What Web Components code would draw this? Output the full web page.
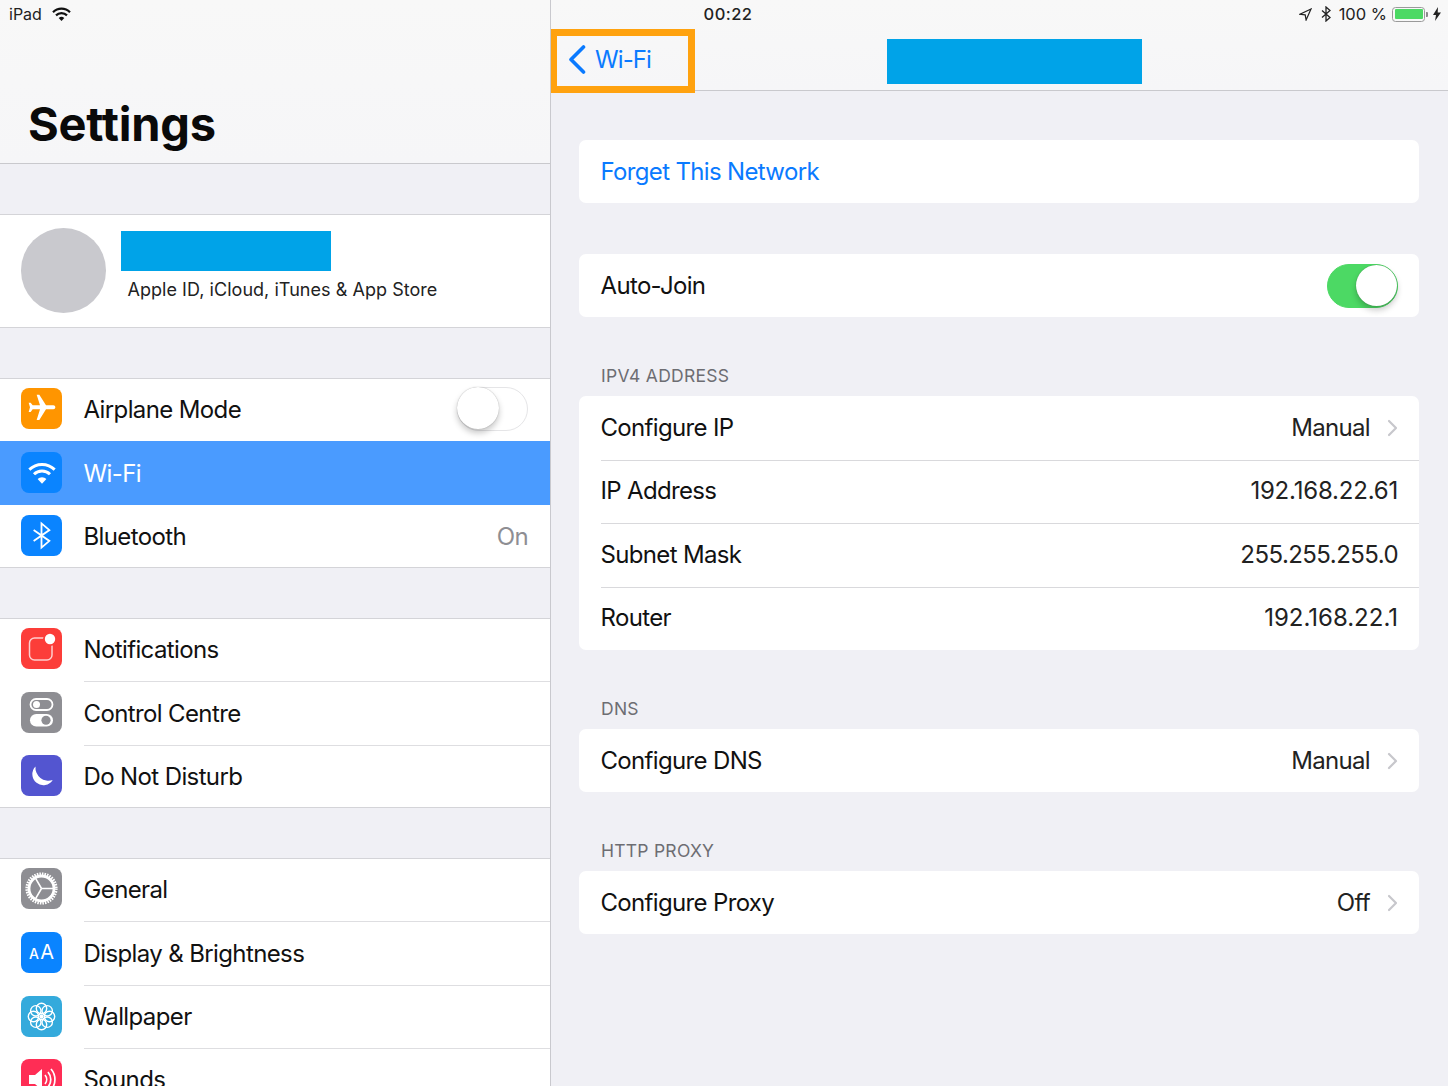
<!doctype html>
<html lang="en"><head><meta charset="utf-8"><title>Settings</title>
<style>
html,body{margin:0;padding:0;height:100%;overflow:hidden;background:#f0f0f5}
body{font-family:Inter,"Liberation Sans",sans-serif;color:#111}
</style></head><body>
<ipad-screen>
  <ios-status slot="status"></ios-status>
  <settings-sidebar slot="left">
    <set-group>
      <profile-row></profile-row>
    </set-group>
    <set-group>
      <set-row label="Airplane Mode"><app-icon slot="icon" kind="plane"></app-icon><ios-switch slot="end"></ios-switch></set-row>
      <set-row label="Wi-Fi" selected><app-icon slot="icon" kind="wifi"></app-icon></set-row>
      <set-row label="Bluetooth" value="On" muted><app-icon slot="icon" kind="bt"></app-icon></set-row>
    </set-group>
    <set-group>
      <set-row label="Notifications"><app-icon slot="icon" kind="notif"></app-icon></set-row>
      <set-row label="Control Centre"><app-icon slot="icon" kind="cc"></app-icon></set-row>
      <set-row label="Do Not Disturb"><app-icon slot="icon" kind="moon"></app-icon></set-row>
    </set-group>
    <set-group>
      <set-row label="General"><app-icon slot="icon" kind="gear"></app-icon></set-row>
      <set-row label="Display &amp; Brightness"><app-icon slot="icon" kind="aa"></app-icon></set-row>
      <set-row label="Wallpaper"><app-icon slot="icon" kind="flower"></app-icon></set-row>
      <set-row label="Sounds"><app-icon slot="icon" kind="sound"></app-icon></set-row>
    </set-group>
  </settings-sidebar>
  <wifi-detail slot="right">
    <detail-card first><detail-row label="Forget This Network" link></detail-row></detail-card>
    <detail-card><detail-row label="Auto-Join"><ios-switch slot="end" on></ios-switch></detail-row></detail-card>
    <detail-card heading="IPV4 ADDRESS">
      <detail-row label="Configure IP" value="Manual" chevron></detail-row>
      <detail-row label="IP Address" value="192.168.22.61" track="-.2px"></detail-row>
      <detail-row label="Subnet Mask" value="255.255.255.0" track="-.55px"></detail-row>
      <detail-row label="Router" value="192.168.22.1" track="0px"></detail-row>
    </detail-card>
    <detail-card heading="DNS"><detail-row label="Configure DNS" value="Manual" chevron></detail-row></detail-card>
    <detail-card heading="HTTP PROXY"><detail-row label="Configure Proxy" value="Off" chevron></detail-row></detail-card>
  </wifi-detail>
</ipad-screen>
<script>
const FONT='Inter,"Liberation Sans",sans-serif';
function def(name,html,cls){
  const t=document.createElement('template');t.innerHTML=html;
  customElements.define(name,class extends HTMLElement{
    constructor(){super();this.attachShadow({mode:'open'}).appendChild(t.content.cloneNode(true));}
    connectedCallback(){cls&&cls.call(this,this.shadowRoot);}
  });
}
def('ipad-screen',`<style>
:host{display:grid;grid-template-columns:551px 1fr;width:1448px;height:1086px;position:relative;overflow:hidden}
.st{position:absolute;left:0;right:0;top:0;z-index:3}
</style><div class="st"><slot name="status"></slot></div><slot name="left"></slot><slot name="right"></slot>`);

def('ios-status',`<style>
:host{display:grid;grid-template-columns:1fr auto 1fr;align-items:center;height:28px;padding:0 7px 0 9px;font:400 16px/28px ${FONT};letter-spacing:0;color:#222}
.l,.r{display:flex;align-items:center}
.l svg{margin-left:10px}
.c{font-weight:500;font-size:16.500px;letter-spacing:.45px;position:relative;left:3px}
.r{justify-content:flex-end}
.pc{font-size:16.500px}
.bat{border:1.500px solid #9a9a9a;border-radius:3.500px;padding:1.500px;box-sizing:border-box;margin-left:5px;width:33px;height:15px}
.bat i{display:block;height:100%;background:#4cd964;border-radius:1px}
.nub{width:2px;height:5px;background:#8a8a8a;margin:0 5px 0 1px;border-radius:0 1px 1px 0}
</style>
<div class="l"><span>iPad</span><svg width="19" height="15" viewBox="0 0 19 15" fill="none" stroke="#111" stroke-width="2.200"><path d="M1 5.200a12 12 0 0 1 17 0"/><path d="M4 8.400a7.800 7.800 0 0 1 11 0"/><path d="M9.500 14L6.700 11a4 4 0 0 1 5.600 0z" fill="#111" stroke="none"/></svg></div>
<div class="c">00:22</div>
<div class="r">
<svg width="13" height="13" viewBox="0 0 13 13" fill="none" stroke="#222" stroke-width="1.200"><path d="M12 1L1 6.300l5.200.6.900 5.100z"/></svg>
<svg style="margin:0 7px 0 9px" width="11" height="16" viewBox="0 0 11 16" fill="none" stroke="#222" stroke-width="1.300"><path d="M1 4.500l8 7-4 3.500V1l4 3.500-8 7"/></svg>
<span class="pc">100 %</span><div class="bat"><i></i></div><div class="nub"></div>
<svg width="8" height="14" viewBox="0 0 8 14"><path d="M5 0L0 8h3l-1 6 6-8.500H4.700z" fill="#222"/></svg>
</div>`);

def('settings-sidebar',`<style>
:host{display:block;box-sizing:border-box;width:551px;height:1086px;background:#f0f0f5;border-right:1px solid #c9c9ce;overflow:hidden}
header{box-sizing:border-box;height:164px;background:linear-gradient(#f8f8f8,#f6f6f8);border-bottom:1px solid #c9c9cd;padding:96px 0 0 28px}
h1{margin:0;font:700 47px/56px ${FONT};letter-spacing:-.2px;color:#0a0a0a}
</style><header><h1>Settings</h1></header><slot></slot>`);

def('set-group',`<style>
:host{display:block;margin-top:50px;background:#fff;border-top:1px solid #d4d4d8;border-bottom:1px solid #d4d4d8}
::slotted(set-row:not(:first-child)){--sep:block}
</style><slot></slot>`);

def('profile-row',`<style>
:host{display:block;box-sizing:border-box;height:112px;position:relative;padding:13px 0 0 21px;background:#fff}
.w{display:flex;gap:15px}
.av{width:85px;height:84.500px;border-radius:50%;background:#c9c9ce;flex:none}
.m{padding-top:3px}
.name{width:210px;height:40px;background:#00a3e8}
.sub{font:400 18px/22px ${FONT};letter-spacing:.04px;margin:8px 0 0 6.500px;color:#222;white-space:nowrap}
</style><div class="w"><div class="av"></div><div class="m"><div class="name"></div><div class="sub">Apple ID, iCloud, iTunes &amp; App Store</div></div></div>`);

def('set-row',`<style>
:host{display:flex;align-items:center;box-sizing:border-box;height:63.500px;padding:0 22px 0 21px;position:relative;font:400 24px/30px ${FONT};letter-spacing:-.62px;color:#111}
:host(:first-child){height:62px;padding-bottom:2px}
:host(:last-child){height:62.500px}
:host([selected]){background:#4a9bff;color:#fff}
:host::before{content:"";display:var(--sep,none);position:absolute;left:84px;right:0;top:0;height:1px;background:#dedee1}
.ic{width:41px;height:41px;margin-right:22px;flex:none}
:host(:first-child) .ic{position:relative;top:-1px}
.lb{flex:1;white-space:nowrap;margin-left:-.5px;padding-top:2px}
.val{color:#8e8e93;padding-top:2px}
</style><div class="ic"><slot name="icon"></slot></div><div class="lb"></div><div class="val"></div><slot name="end"></slot>`,
function(s){s.querySelector('.lb').textContent=this.getAttribute('label');s.querySelector('.val').textContent=this.getAttribute('value')||'';
 const p=this.previousElementSibling; if(p&&p.hasAttribute('selected')) this.style.setProperty('--sep','none');
 if(this.hasAttribute('selected')) this.style.setProperty('--sep','none');});

const V='0 0 41 41';
const ICONS={
plane:['#ff9500','<path transform="rotate(90 12 12)" fill="#fff" d="M21 16v-2l-8-5V3.500c0-.83-.67-1.500-1.500-1.500S10 2.670 10 3.500V9l-8 5v2l8-2.500V19l-2 1.500V22l3.500-1 3.500 1v-1.500L13 19v-5.500l8 2.500z"/>',32],
wifi:['#0a84ff','<g fill="none" stroke="#fff" stroke-width="2.200"><path d="M2.500 9.500a13.500 13.500 0 0 1 19 0"/><path d="M6 13a8.500 8.500 0 0 1 12 0"/></g><path fill="#fff" d="M12 20l-3.300-3.500a4.700 4.700 0 0 1 6.600 0z"/>',32],
bt:['#0a84ff','<path fill="none" stroke="#fff" stroke-width="1.500" d="M5.500 7.500l13 9L12 22V2l6.500 5.500-13 9"/>',29],
notif:['#fc3d39','<rect x="8.500" y="10" width="22.500" height="22" rx="5" fill="none" stroke="#fff" stroke-opacity=".75" stroke-width="1.500"/><circle cx="29" cy="11" r="7" fill="#fc3d39"/><circle cx="29" cy="11" r="5.200" fill="#fff"/>',41,V],
cc:['#8e8e93','<rect x="9.500" y="7" width="22" height="11" rx="5.500" fill="none" stroke="#fff" stroke-width="1.800"/><circle cx="15.500" cy="12.500" r="3.500" fill="#fff"/><rect x="9" y="22" width="23" height="12.500" rx="6.250" fill="#fff"/><circle cx="25" cy="28.250" r="4.600" fill="#8e8e93"/>',41,V],
moon:['#5355d0','<path fill="#fff" d="M14.500 11.500A11 11 0 1 0 31.700 25A13 13 0 0 1 14.500 11.500z"/>',41,V],
gear:['#8e8e93','<circle cx="20.500" cy="20.500" r="12.500" fill="none" stroke="#fff" stroke-width="2.800"/><circle cx="20.500" cy="20.500" r="14.500" fill="none" stroke="#fff" stroke-width="3.200" stroke-dasharray="1.500 1.030"/><g stroke="#fff" stroke-width="1.600"><path d="M20.500 20.500H33M20.500 20.500l-6.200-10.700M20.500 20.500l-6.200 10.700"/></g>',41,V],
flower:['#34aadc','<g fill="none" stroke="#fff" stroke-width="1.400"><circle cx="20.500" cy="12.500" r="5.200"/><circle cx="26.200" cy="14.800" r="5.200"/><circle cx="28.500" cy="20.500" r="5.200"/><circle cx="26.200" cy="26.200" r="5.200"/><circle cx="20.500" cy="28.500" r="5.200"/><circle cx="14.800" cy="26.200" r="5.200"/><circle cx="12.500" cy="20.500" r="5.200"/><circle cx="14.800" cy="14.800" r="5.200"/></g><circle cx="20.500" cy="20.500" r="2" fill="#fff"/>',41,V],
sound:['#ff2d55','<path fill="#fff" d="M8 16h6l7-6v21l-7-6H8z"/><g fill="none" stroke="#fff" stroke-width="1.700"><path d="M24 16a7 7 0 0 1 0 9"/><path d="M27 13a11.500 11.500 0 0 1 0 15"/><path d="M30 10a16 16 0 0 1 0 21"/></g>',41,V],
};
def('app-icon',`<style>
:host{display:flex;align-items:center;justify-content:center;width:41px;height:41px;border-radius:8px;overflow:hidden}
.aa{color:#fff;font-family:${FONT};font-weight:500;display:flex;align-items:baseline;gap:1.500px;letter-spacing:0}
.a1{font-size:14px;line-height:20px}.a2{font-size:20px;line-height:20px;font-weight:400}
</style><div id="x" style="display:contents"></div>`,function(s){
 const k=this.getAttribute('kind'),x=s.getElementById('x');
 if(k==='aa'){this.style.background='#0a84ff';x.innerHTML='<div class="aa"><span class="a1">A</span><span class="a2">A</span></div>';return;}
 const [bg,svg,size,vb]=ICONS[k];this.style.background=bg;
 x.innerHTML=`<svg width="${size}" height="${size}" viewBox="${vb||'0 0 24 24'}" style="flex:none">${svg}</svg>`;
});

def('ios-switch',`<style>
:host{display:block;box-sizing:border-box;width:71px;height:44px;border-radius:22px;border:1.500px solid #e5e5e7;background:#fff;position:relative;flex:none}
:host([on]){background:#4cd964;border-color:#4cd964}
i{position:absolute;left:-1.500px;top:-1.500px;width:42px;height:42px;border-radius:50%;background:#fff;box-shadow:0 4px 6px rgba(0,0,0,.22),0 0 1px rgba(0,0,0,.35)}
:host([on]) i{left:auto;right:0;top:0;width:41px;height:41px}
</style><i></i>`);

def('wifi-detail',`<style>
:host{display:block;height:1086px;background:#f0f0f5;overflow:hidden}
nav{box-sizing:border-box;height:91px;background:linear-gradient(#f8f8f8,#f6f6f8);border-bottom:1px solid #c9c9cd;position:relative;display:flex;padding-top:39px}
.back{display:flex;align-items:flex-start;width:336px;box-sizing:border-box;padding:6px 0 0 17px;color:#0a7aff;font:400 24px/30px ${FONT};letter-spacing:-.9px}
.back svg{margin-right:9px;margin-top:0}
.title{width:255px;height:45px;background:#00a3e8}
.hl{position:absolute;left:-1px;top:29px;width:145px;height:64px;box-sizing:border-box;border:7px solid #ffa20f;z-index:2}
main{padding:49px 29px 0 28px}
</style><nav><div class="back"><svg width="18" height="30" viewBox="0 0 18 30" fill="none" stroke="#0a7aff" stroke-width="3.600" stroke-linecap="round" stroke-linejoin="round"><path d="M15.500 2L3 14.500 15.500 27"/></svg>Wi-Fi</div><div class="title"></div><div class="hl"></div></nav><main><slot></slot></main>`);

def('detail-card',`<style>
:host{display:block;margin-top:51px}
:host([first]){margin-top:0}
:host([heading]){margin-top:48px}
h2{display:none;margin:0;font:400 17.500px/22px ${FONT};letter-spacing:.25px;color:#6d6d72;padding:0 0 9px 22px}
:host([heading]) h2{display:block}
.c{background:#fff;border-radius:7px;overflow:hidden}
</style><h2></h2><div class="c"><slot></slot></div>`,function(s){s.querySelector('h2').textContent=this.getAttribute('heading')||'';});

def('detail-row',`<style>
:host{display:flex;align-items:center;box-sizing:border-box;height:63.500px;padding:0 21px 0 21.500px;position:relative;font:400 24px/30px ${FONT};letter-spacing:-.66px;color:#111}
:host(:only-child){height:63px}
:host(:not(:first-child))::before{content:"";position:absolute;left:22px;right:0;top:0;height:1px;background:#d9d9dc}
.lb{flex:1;white-space:nowrap}
:host([link]) .lb{color:#0a7aff}
.val{color:#222}
svg{display:none;margin-left:17px}
:host([chevron]) svg{display:block}
</style><div class="lb"></div><div class="val"></div><svg width="11" height="18" viewBox="0 0 11 18" fill="none" stroke="#c7c7cc" stroke-width="2.200" stroke-linecap="round" stroke-linejoin="round"><path d="M2 2l7 7-7 7"/></svg><slot name="end"></slot>`,
function(s){s.querySelector('.lb').textContent=this.getAttribute('label');const v=s.querySelector('.val');v.textContent=this.getAttribute('value')||'';
 if(this.hasAttribute('track')) v.style.letterSpacing=this.getAttribute('track');});
</script>
</body></html>
